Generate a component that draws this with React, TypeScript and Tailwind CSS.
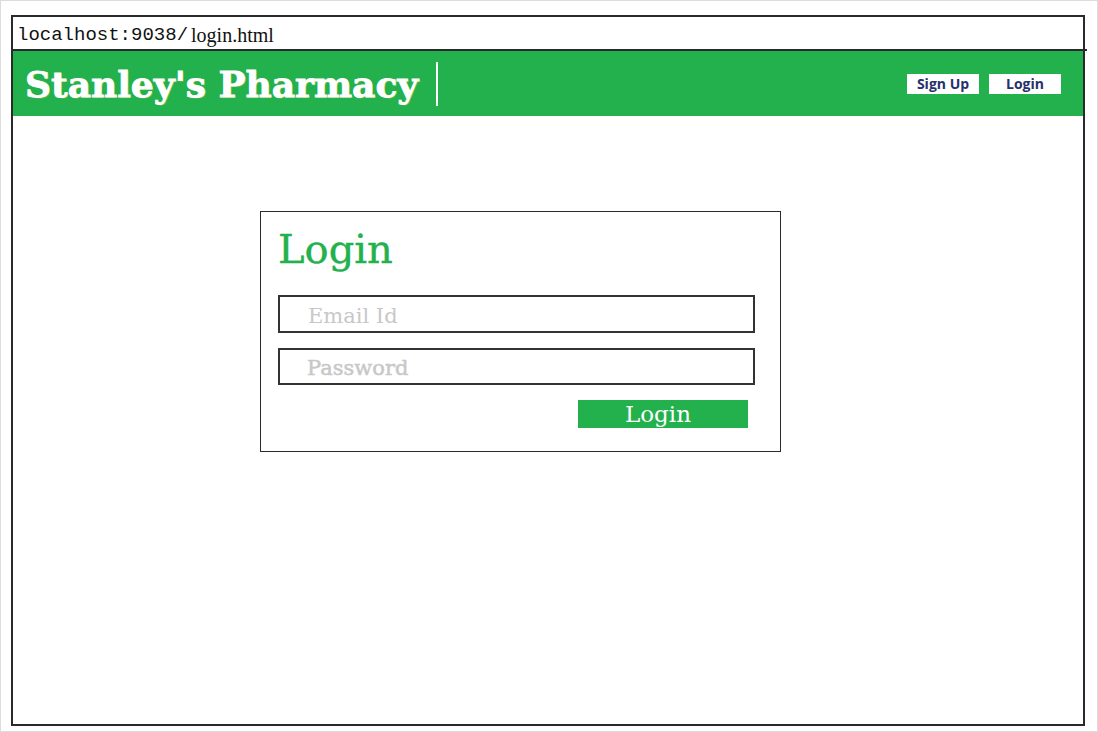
import React from "react";

export default function App() {
  return (
    <div className="w-[1098px] h-[732px] bg-white border border-[#dcdcdc] relative overflow-hidden">
      <div className="absolute left-[10px] top-[14px] w-[1074px] h-[711px] border-2 border-[#2a2a2a] flex flex-col bg-white">
        <div className="h-[34px] border-b-2 border-[#2a2a2a] flex items-end pb-[4px] pl-[4px] relative">
          <span className="text-[19px] leading-none text-[#111]" style={{ fontFamily: '"Liberation Mono", monospace' }}>localhost:9038/</span>
          <span className="text-[20px] leading-none text-[#111] ml-[3px]" style={{ fontFamily: '"Liberation Serif", serif' }}>login.html</span>
          <div className="absolute right-[-4px] bottom-[-2px] w-[4px] h-[2px] bg-[#2a2a2a]" />
        </div>
        <div className="h-[65px] bg-[#22b14c] flex items-center pl-[12px] pr-[22px]">
          <span
            className="text-[36px] font-bold text-white leading-none [-webkit-text-stroke:0.8px_white]"
            style={{ fontFamily: '"DejaVu Serif", serif', textShadow: "1px 1px 0 rgba(210,200,60,0.45)" }}
          >
            Stanley's Pharmacy
          </span>
          <div className="w-[2px] h-[44px] bg-white ml-[18px]" />
          <div className="ml-auto flex gap-[10px]">
            <div className="w-[72px] h-[20px] bg-white flex items-center justify-center text-[14px] font-bold text-[#27306b]" style={{ fontFamily: '"Open Sans", sans-serif' }}>Sign Up</div>
            <div className="w-[72px] h-[20px] bg-white flex items-center justify-center text-[14px] font-bold text-[#27306b]" style={{ fontFamily: '"Open Sans", sans-serif' }}>Login</div>
          </div>
        </div>
        <div className="pt-[95px] pl-[247px]">
          <div className="w-[521px] h-[241px] border-[1.5px] border-[#2a2a2a] pl-[17px] pt-[12px]" style={{ fontFamily: '"DejaVu Serif", serif' }}>
            <div className="text-[40px] leading-[50px] text-[#22b14c] [-webkit-text-stroke:0.4px_#22b14c]">Login</div>
            <div className="mt-[21px] w-[477px] h-[38px] border-2 border-[#333] flex items-center pl-[28px] pt-[5px] text-[21px] text-[#c8c8c8]">Email Id</div>
            <div className="mt-[15px] w-[477px] h-[37px] border-2 border-[#333] flex items-center pl-[27px] pt-[5px] text-[21px] text-[#c8c8c8] [-webkit-text-stroke:0.5px_#c8c8c8]">Password</div>
            <div className="mt-[15px] ml-[300px] w-[170px] h-[28px] bg-[#22b14c] flex items-center justify-center pr-[10px] text-[23px] text-white leading-none">Login</div>
          </div>
        </div>
      </div>
    </div>
  );
}
